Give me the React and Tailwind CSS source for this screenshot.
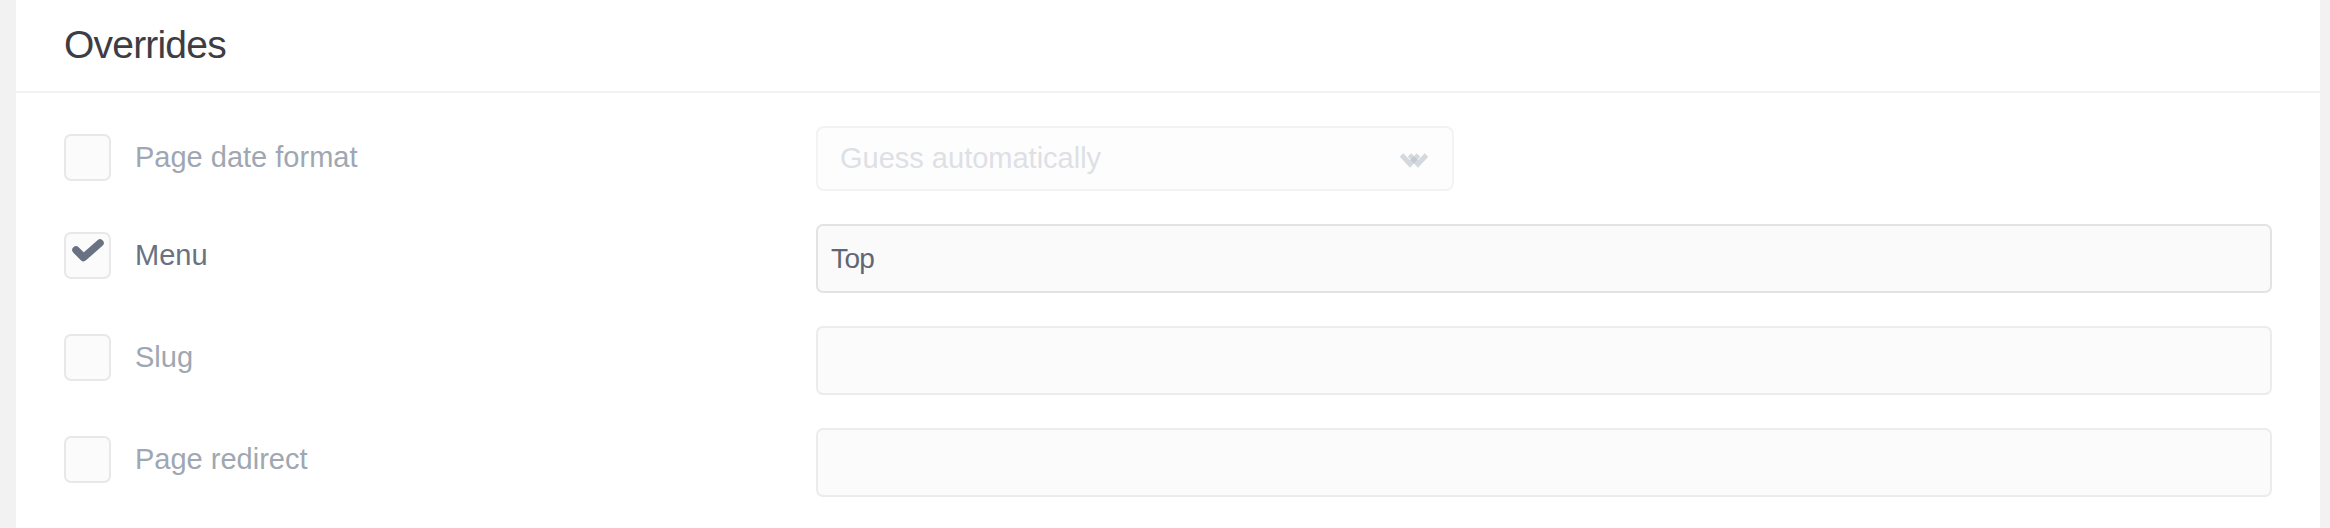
import React from "react";

// ---- 行数据 ----
const rows = [
    { label: "Page date format", checked: false, kind: "select", value: "Guess automatically" },
    { label: "Menu", checked: true, kind: "input", value: "Top" },
    { label: "Slug", checked: false, kind: "input", value: "" },
    { label: "Page redirect", checked: false, kind: "input", value: "" },
];

function Checkbox({ checked }) {
    return (
        <div className="w-[47px] h-[47px] shrink-0 rounded-[7px] border-2 border-[#e8e8e8] bg-[#fbfbfb] flex items-center justify-center">
            {checked && (
                <svg width="43" height="43" viewBox="0 0 43 43">
                    <polyline
                        points="10,16 17.5,23.5 34,9"
                        fill="none"
                        stroke="#687282"
                        strokeWidth="7.5"
                        strokeLinecap="round"
                        strokeLinejoin="round"
                    />
                </svg>
            )}
        </div>
    );
}

function Chevron() {
    return (
        <svg width="28" height="15" viewBox="0 0 28 15" className="mt-[3px]">
            <polyline points="1.5,2 10,11 18.5,2" fill="none" stroke="#b3bbc5" strokeOpacity="0.55" strokeWidth="5" />
            <polyline points="9.5,2 18,11 26.5,2" fill="none" stroke="#b3bbc5" strokeOpacity="0.55" strokeWidth="5" />
        </svg>
    );
}

export default function App() {
    return (
        <div className="w-full h-[528px] bg-[#f2f2f2] flex pl-[16px] pr-[10px] font-['Liberation_Sans',Arial,sans-serif]">
            <div className="flex-1 bg-white flex flex-col">
                {/* 标题 */}
                <div className="h-[93px] px-[48px] border-b-2 border-[#f2f2f2] flex items-center">
                    <h1 className="text-[39px] leading-none tracking-[-0.8px] text-[#3d3d43] pb-[3px]">
                        Overrides
                    </h1>
                </div>

                {/* 表单 */}
                <div className="px-[48px] pt-[33px] flex flex-col gap-[33px] bg-white flex-1">
                    {rows.map((r) => (
                        <div key={r.label} className="flex items-start">
                            <div className="w-[752px] shrink-0 mt-[8px] flex items-center gap-[24px]">
                                <Checkbox checked={r.checked} />
                                <span
                                    className={
                                        "text-[29px] leading-none " +
                                        (r.checked ? "text-[#687282]" : "text-[#9ea7b2]")
                                    }
                                >
                                    {r.label}
                                </span>
                            </div>

                            {r.kind === "select" ? (
                                <div className="w-[638px] h-[65px] rounded-[8px] border-2 border-[#f3f3f3] bg-[#fdfdfd] flex items-center justify-between pl-[22px] pr-[24px]">
                                    <span className="text-[29px] leading-none text-[#dde0e5]">{r.value}</span>
                                    <Chevron />
                                </div>
                            ) : (
                                <div
                                    className={
                                        "flex-1 h-[69px] rounded-[7px] border-2 flex items-center pl-[13px] " +
                                        (r.checked ? "border-[#e3e3e3] bg-[#fafafa]" : "border-[#ececec] bg-[#fbfbfb]")
                                    }
                                >
                                    <span className="text-[28px] leading-none tracking-[-0.6px] text-[#5f6674]">{r.value}</span>
                                </div>
                            )}
                        </div>
                    ))}
                </div>
            </div>
        </div>
    );
}
